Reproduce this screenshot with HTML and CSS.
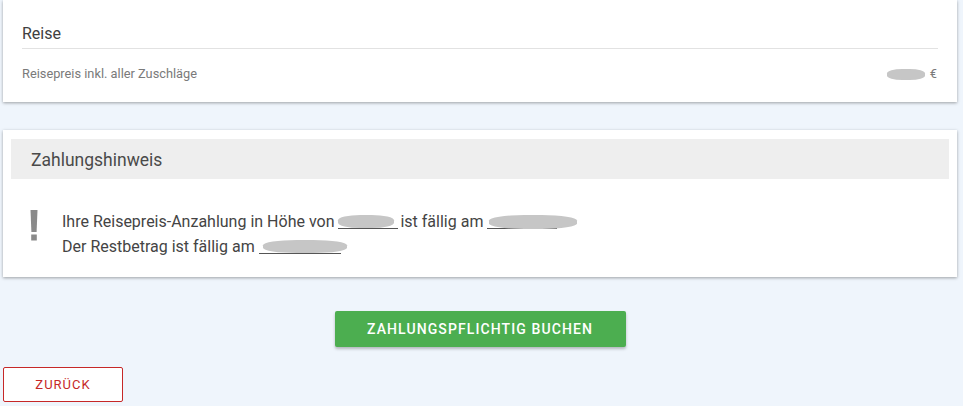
FILE: index.html
```html
<!DOCTYPE html>
<html lang="de">
<head>
  <meta charset="UTF-8">
  <title>Buchung – Zahlung</title>
  <link rel="stylesheet" href="styles.css">
</head>
<body>
  <div class="page">

    <div class="card summary">
      <div class="summary-title">Reise</div>
      <div class="summary-row">
        <span>Reisepreis inkl. aller Zuschläge</span>
        <span class="price"><span class="blob blob-price"></span> €</span>
      </div>
    </div>

    <div class="card notice">
      <div class="notice-head">Zahlungshinweis</div>
      <div class="notice-body">
        <svg class="notice-icon" width="8" height="31" viewBox="0 0 8 31">
          <path d="M0.5 0 H7.5 L6.6 22 H1.4 Z" fill="#8a8a8a"/>
          <rect x="1.2" y="24.5" width="5.6" height="6" fill="#8a8a8a"/>
        </svg>
        <div class="notice-text">
          <p>Ihre Reisepreis-Anzahlung in Höhe von <span class="masked m-amount"><span class="blob"></span></span> ist fällig am <span class="masked m-date"><span class="blob"></span></span></p>
          <p>Der Restbetrag ist fällig am <span class="masked m-rest"><span class="blob"></span></span></p>
        </div>
      </div>
    </div>

    <div class="actions">
      <button class="btn-book">Zahlungspflichtig buchen</button>
    </div>

    <button class="btn-back">Zurück</button>

  </div>
</body>
</html>
```

FILE: styles.css
```css
body {
  margin: 0;
  font-family: Roboto, "Noto Sans", Arial, sans-serif;
  background-color: #eff5fc;
  color: #333;
}
.page {
  padding: 0 6px 0 3px;
}
.card {
  background: #fff;
  box-shadow: 0 1px 3px rgba(0, 0, 0, 0.35);
}
.summary {
  padding: 0 19px 20px;
}
.summary-title {
  font-size: 16px;
  line-height: 22px;
  padding: 23px 0 3px;
  border-bottom: 1px solid #e2e2e2;
  color: #404040;
}
.summary-row {
  display: flex;
  justify-content: space-between;
  align-items: center;
  padding-top: 17px;
  font-size: 12.8px;
  line-height: 16px;
  color: #7a7a7a;
}
.price {
  display: flex;
  align-items: center;
  gap: 3px;
  padding-right: 1px;
}
.blob {
  display: inline-block;
  background: #c6c6c6;
  border-radius: 40%;
}
.blob-price {
  width: 38px;
  height: 11px;
  margin-right: 2px;
}
.notice {
  margin-top: 28px;
  padding: 9px 8px;
}
.notice-head {
  background: #eeeeee;
  height: 40px;
  line-height: 43px;
  padding-left: 20px;
  font-size: 17.5px;
  color: #4a4a4a;
}
.notice-body {
  display: flex;
  align-items: flex-start;
  padding: 31px 0 9px 19px;
}
.notice-icon {
  flex: none;
  margin-right: 24px;
}
.notice-text {
  margin-top: -1px;
}
.notice-text p {
  margin: 0;
  font-size: 16px;
  line-height: 25px;
  color: #444;
}
.masked {
  display: inline-block;
  position: relative;
  height: 14px;
  border-bottom: 1px solid #555;
  vertical-align: -2px;
}
.masked .blob {
  position: absolute;
  top: 1px;
  height: 13px;
}
.m-amount { width: 60px; margin-right: -2px; }
.m-amount .blob { left: 0; width: 56px; }
.m-date { width: 70px; }
.m-date .blob { left: 2px; width: 88px; height: 14px; }
.m-rest { width: 82px; }
.m-rest .blob { left: 4px; width: 84px; }
.actions {
  display: flex;
  justify-content: center;
  margin-top: 34px;
}
.btn-book {
  width: 291px;
  height: 36px;
  border: none;
  border-radius: 2px;
  background: #4cae50;
  color: #fff;
  font-family: inherit;
  font-size: 14px;
  font-weight: 500;
  letter-spacing: 1.1px;
  text-transform: uppercase;
  box-shadow: 0 2px 3px rgba(0, 0, 0, 0.25);
}
.btn-back {
  margin-top: 20px;
  width: 120px;
  height: 35px;
  background: #fff;
  border: 1px solid #c62828;
  border-radius: 2px;
  color: #c62828;
  font-family: inherit;
  font-size: 13px;
  letter-spacing: 1px;
  text-transform: uppercase;
}
```
